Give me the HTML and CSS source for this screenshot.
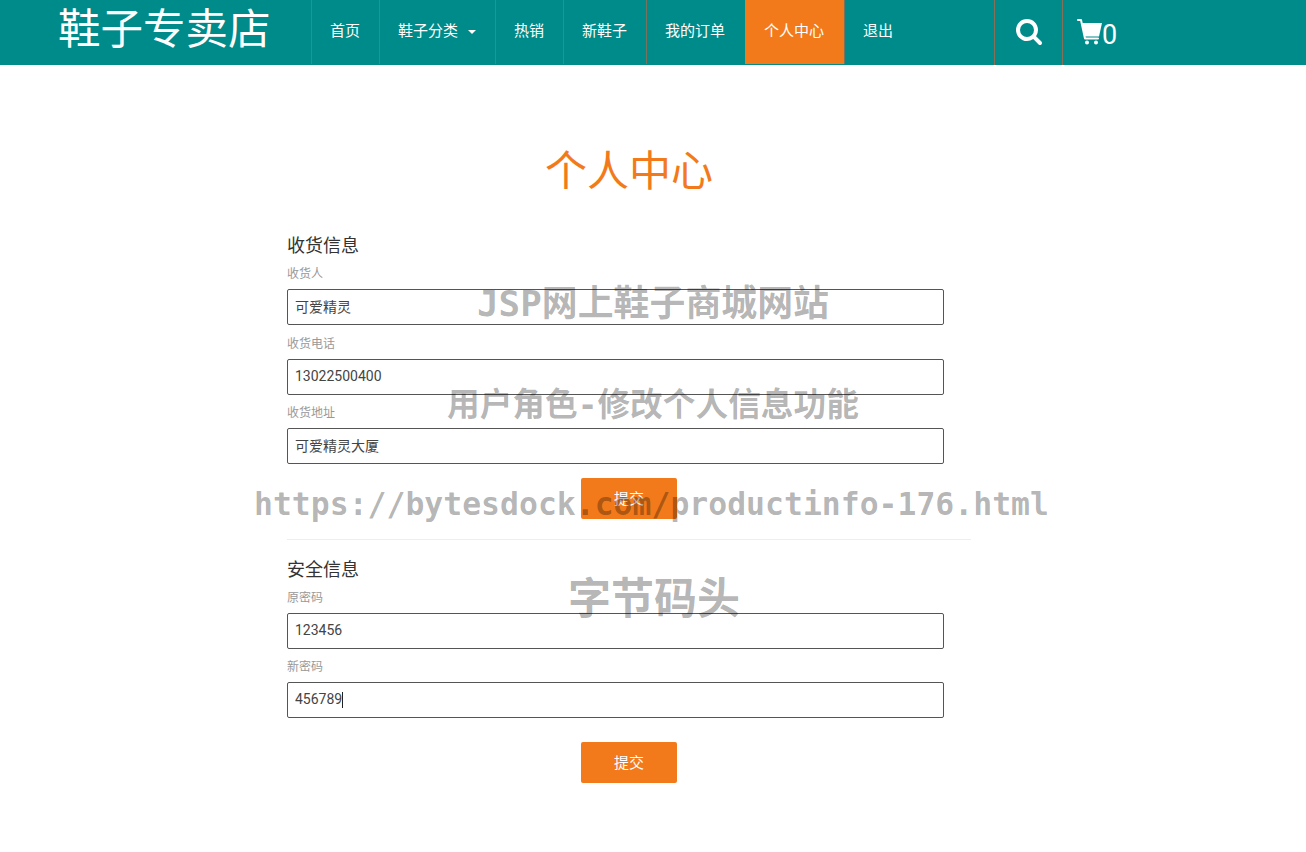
FILE: index.html
```html
<!DOCTYPE html>
<html lang="zh-CN">
<head>
<meta charset="UTF-8">
<meta name="viewport" content="width=device-width, initial-scale=1.0">
<title>个人中心</title>
<link rel="stylesheet" href="styles.css">
</head>
<body>
<header class="topbar">
    <a class="logo" href="#">鞋子专卖店</a>
    <nav class="menu">
        <a href="#">首页</a>
        <a href="#">鞋子分类<i class="arrow"></i></a>
        <a href="#">热销</a>
        <a href="#">新鞋子</a>
        <a href="#" class="wide">我的订单</a>
        <a href="#" class="wide active">个人中心</a>
        <a href="#">退出</a>
    </nav>
    <div class="tools">
        <a href="#" class="tool-search">
            <svg viewBox="0 0 1792 1792" width="28" height="28"><path fill="#fff" d="M1216 832q0-185-131.5-316.5t-316.5-131.5-316.5 131.5-131.5 316.5 131.5 316.5 316.5 131.5 316.5-131.5 131.5-316.5zm512 832q0 52-38 90t-90 38q-54 0-90-38l-343-342q-179 124-399 124-143 0-273.5-55.5t-225-150-150-225-55.5-273.5 55.5-273.5 150-225 225-150 273.5-55.5 273.5 55.5 225 150 150 225 55.5 273.5q0 220-124 399l343 343q37 37 37 90z"/></svg>
        </a>
        <a href="#" class="tool-cart">
            <svg viewBox="0 0 25 26" width="25" height="26">
                <path fill="none" stroke="#fff" stroke-width="2" stroke-linecap="round" stroke-linejoin="round" d="M1 1h3l4 18.500h13"/>
                <path fill="#fff" d="M5 4h20l-3 13.500-14.500 0z"/>
                <circle fill="#fff" cx="10" cy="23.500" r="2"/>
                <circle fill="#fff" cx="19" cy="23.500" r="2"/>
            </svg>
            <span>0</span>
        </a>
    </div>
</header>

<main class="page">
    <h1 class="page-title">个人中心</h1>

    <form class="info-form">
        <h2>收货信息</h2>
        <div class="field">
            <label>收货人</label>
            <input type="text" value="可爱精灵">
        </div>
        <div class="field">
            <label>收货电话</label>
            <input type="text" value="13022500400">
        </div>
        <div class="field">
            <label>收货地址</label>
            <input type="text" value="可爱精灵大厦">
        </div>
        <button type="button" class="submit-btn">提交</button>
    </form>

    <hr class="divider">

    <form class="info-form">
        <h2>安全信息</h2>
        <div class="field">
            <label>原密码</label>
            <input type="text" value="123456">
        </div>
        <div class="field">
            <label>新密码</label>
            <div class="input-wrap">
                <input type="text" value="456789">
                <span class="caret"></span>
            </div>
        </div>
        <button type="button" class="submit-btn submit-last">提交</button>
    </form>
</main>

<div class="watermark">
    <p class="wm-1">JSP网上鞋子商城网站</p>
    <p class="wm-2">用户角色-修改个人信息功能</p>
    <p class="wm-3">https://bytesdock.com/productinfo-176.html</p>
    <p class="wm-4">字节码头</p>
</div>
</body>
</html>
```

FILE: styles.css
```css
body {
    margin: 0;
    padding: 0;
    background: #fff;
    color: #333;
    font-family: Roboto, "Noto Sans CJK SC", sans-serif;
    font-size: 14px;
}
a {
    text-decoration: none;
    color: #fff;
}
.topbar {
    display: flex;
    height: 65px;
    background-color: #008b8b;
}
.logo {
    width: 253px;
    padding-left: 58px;
    font-size: 42.5px;
    line-height: 59px;
    white-space: nowrap;
}
.menu {
    display: flex;
    width: 683px;
    height: 64px;
}
.menu a {
    padding: 0 19px 0 18px;
    border-left: 1px solid rgba(170, 105, 75, 0.7);
    font-size: 15px;
    line-height: 62px;
    white-space: nowrap;
}
.menu a.wide {
    padding-right: 20px;
}
.menu a.active {
    background-color: #f27a1a;
    border-left-color: transparent;
}
.arrow {
    display: inline-block;
    margin-left: 10px;
    vertical-align: middle;
    border-top: 4px solid #fff;
    border-left: 4px solid transparent;
    border-right: 4px solid transparent;
}
.tools {
    display: flex;
    height: 65px;
}
.tools a {
    display: flex;
    align-items: center;
    border-left: 1px solid rgba(170, 105, 75, 0.8);
}
.tool-search {
    width: 68px;
    padding-left: 20px;
    box-sizing: border-box;
}
.tool-search svg {
    margin-bottom: 4px;
}
.tool-cart {
    padding-left: 14px;
}
.tool-cart svg {
    margin-bottom: 1px;
}
.tool-cart span {
    font-size: 27px;
    line-height: 1;
    margin-top: 6px;
}
.page {
    width: 684px;
    margin-left: 287px;
    padding-top: 79px;
}
.page-title {
    margin: 0 0 34px;
    color: #f27a1a;
    font-size: 42px;
    font-weight: normal;
    line-height: 56px;
    text-align: center;
}
.info-form h2 {
    margin: 0 0 4px;
    color: #333;
    font-size: 18px;
    font-weight: normal;
    line-height: 24px;
}
.field {
    height: 69.6px;
}
.field label {
    display: block;
    height: 27px;
    color: #999;
    font-size: 12px;
    line-height: 24px;
}
.field input {
    display: block;
    width: 96%;
    height: 36px;
    box-sizing: border-box;
    padding: 0 7px 2px;
    border: 1px solid #555;
    border-radius: 2px;
    color: #444;
    font-family: Roboto, "Noto Sans CJK SC", sans-serif;
    font-size: 14px;
    outline: none;
}
.input-wrap {
    position: relative;
}
.caret {
    position: absolute;
    left: 55px;
    top: 10px;
    width: 1px;
    height: 16px;
    background: #222;
}
.submit-btn {
    display: block;
    width: 96px;
    height: 41px;
    margin: 7.4px auto 0;
    padding: 0 0 2px;
    border: none;
    border-radius: 2px;
    background-color: #f27a1a;
    color: #fff;
    font-family: Roboto, "Noto Sans CJK SC", sans-serif;
    font-size: 15px;
    cursor: pointer;
}
.submit-last {
    margin-top: 16.8px;
}
.divider {
    height: 1px;
    margin: 20px 0 17.6px;
    border: none;
    background: #eee;
}
.watermark {
    position: absolute;
    top: 0;
    left: 0;
    width: 1306px;
    pointer-events: none;
    color: rgba(0, 0, 0, 0.3);
    font-weight: bold;
    white-space: nowrap;
}
.watermark p {
    position: absolute;
    margin: 0;
    line-height: 1;
}
.wm-1 {
    left: 477px;
    top: 286px;
    font-family: "DejaVu Sans Mono", "Noto Sans CJK SC", monospace;
    font-size: 35.9px;
}
.wm-2 {
    left: 447px;
    top: 389px;
    font-family: "DejaVu Sans Mono", "Noto Sans CJK SC", monospace;
    font-size: 32.7px;
}
.wm-3 {
    left: 254px;
    top: 489px;
    font-family: "DejaVu Sans Mono", monospace;
    font-size: 31.45px;
}
.wm-4 {
    left: 568px;
    top: 574px;
    font-family: "Noto Sans CJK SC", sans-serif;
    font-size: 43px;
}
```
